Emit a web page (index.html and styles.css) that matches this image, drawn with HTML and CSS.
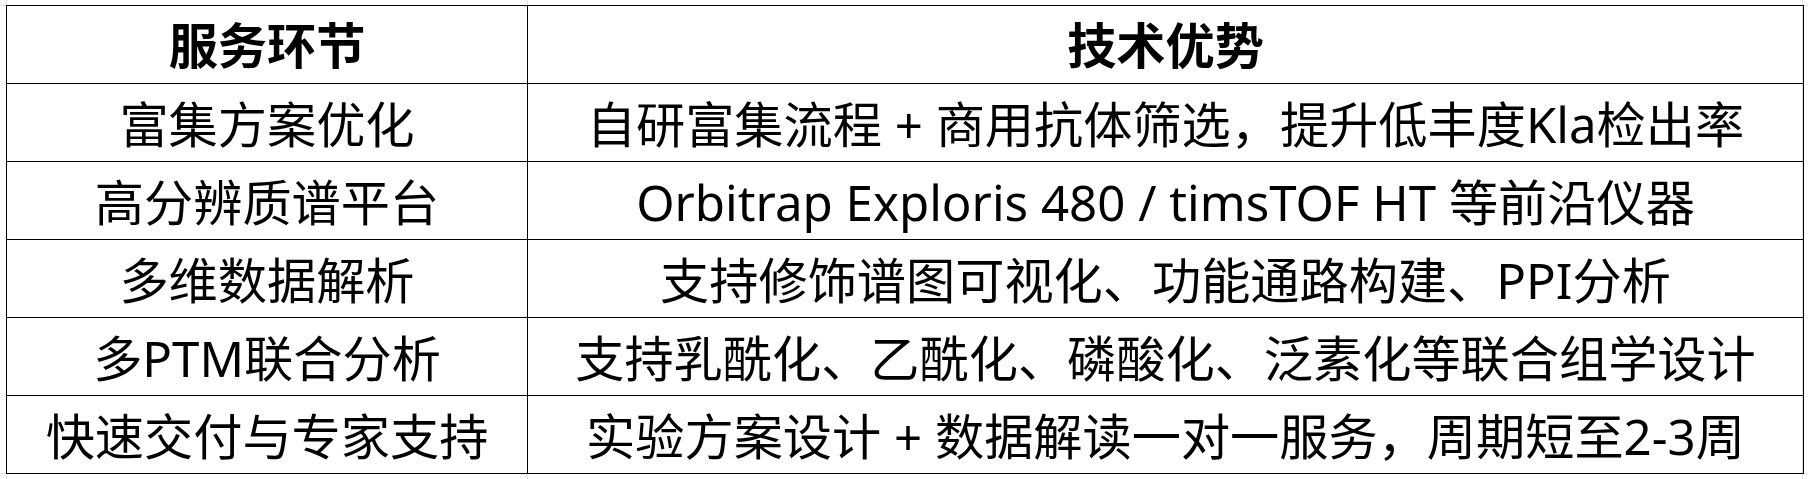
FILE: index.html
```html
<!DOCTYPE html>
<html lang="zh-CN">
<head>
<meta charset="utf-8">
<title>服务环节与技术优势</title>
<link rel="stylesheet" href="styles.css">
</head>
<body>
<table class="grid">
  <colgroup>
    <col class="col-a">
    <col class="col-b">
  </colgroup>
  <thead>
    <tr><th>服务环节</th><th>技术优势</th></tr>
  </thead>
  <tbody>
    <tr><td>富集方案优化</td><td>自研富集流程 + 商用抗体筛选，提升低丰度Kla检出率</td></tr>
    <tr><td>高分辨质谱平台</td><td>Orbitrap Exploris 480 / timsTOF HT 等前沿仪器</td></tr>
    <tr><td>多维数据解析</td><td>支持修饰谱图可视化、功能通路构建、PPI分析</td></tr>
    <tr><td>多PTM联合分析</td><td>支持乳酰化、乙酰化、磷酸化、泛素化等联合组学设计</td></tr>
    <tr><td>快速交付与专家支持</td><td>实验方案设计 + 数据解读一对一服务，周期短至2-3周</td></tr>
  </tbody>
</table>
</body>
</html>
```
FILE: styles.css
```css
html {
  background-color: #fff;
  background-image:
    linear-gradient(#e2e2e2, #e2e2e2),
    linear-gradient(#e2e2e2, #e2e2e2),
    linear-gradient(#e2e2e2, #e2e2e2),
    linear-gradient(#e2e2e2, #e2e2e2),
    linear-gradient(#e2e2e2, #e2e2e2);
  background-repeat: no-repeat;
  background-size: 1px 100%, 1px 100%, 1px 100%, 100% 1px, 100% 1px;
  background-position: 6px 0, 527px 0, 1802px 0, 0 5px, 0 473px;
  height: 100%;
}
body {
  margin: 0;
  padding: 5px 0 0 6px;
  font-family: "Noto Sans", "Noto Sans CJK SC", sans-serif;
  color: #000;
}
.grid {
  border-collapse: collapse;
  width: 1797px;
  table-layout: fixed;
}
.col-a { width: 521px; }
.col-b { width: 1276px; }
.grid th,
.grid td {
  border: 1px solid #000;
  height: 77px;
  padding: 0;
  text-align: center;
  vertical-align: middle;
  font-size: 49.2px;
  line-height: 60px;
  white-space: nowrap;
}
.grid th { font-weight: 700; }
.grid td {
  font-weight: 400;
  height: 75px;
  padding-top: 2px;
}
```
